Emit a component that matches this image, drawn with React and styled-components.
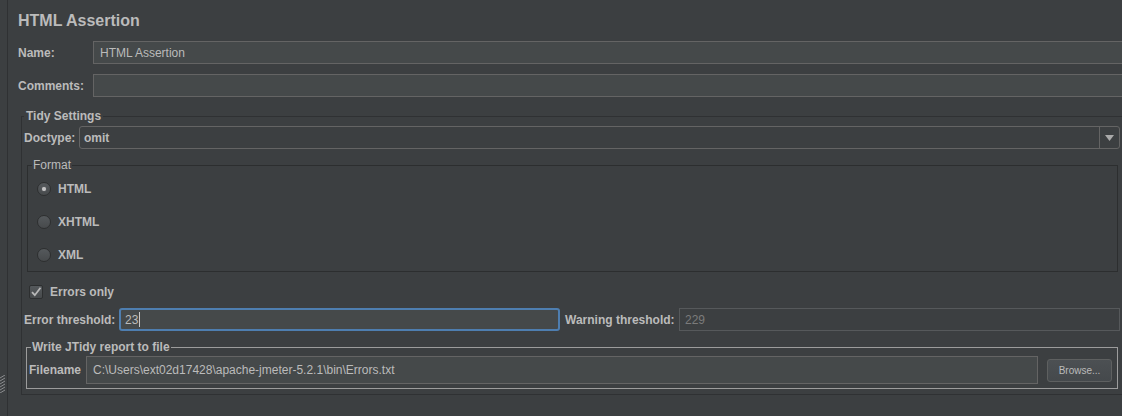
import React from "react";
import styled, { createGlobalStyle, css } from "styled-components";

const GlobalStyle = createGlobalStyle`
  html, body { margin: 0; padding: 0; background: #3c3f41; }
  body {
    font-family: "Liberation Sans", Arial, sans-serif;
    font-size: 12px;
    color: #bbbbbb;
  }
  * { box-sizing: border-box; }
`;

const Frame = styled.div`
  display: flex;
  width: 1122px;
  height: 416px;
  overflow: hidden;
  background: #3c3f41;
`;

const SideStrip = styled.div`
  flex: none;
  width: 7px;
  display: flex;
  flex-direction: column;
  justify-content: flex-end;
  padding-bottom: 23px;
`;

const Divider = styled.div`
  flex: none;
  width: 1px;
  background: #2f3133;
`;

const Main = styled.div`
  flex: none;
  width: 1115px;
  padding: 11px 0 0 10px;
  display: flex;
  flex-direction: column;
`;

const Title = styled.div`
  font-size: 16px;
  font-weight: bold;
  line-height: 20px;
  height: 20px;
  color: #bbbbbb;
`;

const FieldRow = styled.div`
  display: grid;
  grid-template-columns: 75px 1fr;
  align-items: center;
  margin-top: ${(p) => p.$top}px;
`;

const Label = styled.div`
  font-weight: bold;
  font-size: 12px;
  white-space: nowrap;
  color: #bbbbbb;
  ${(p) => p.$width && css`width: ${p.$width}px; flex: none;`}
  ${(p) => p.$gapLeft && css`margin-left: ${p.$gapLeft}px;`}
`;

const TextBox = styled.div`
  height: ${(p) => p.$h || 23}px;
  background: #45494a;
  border: 1px solid #646464;
  padding: 0 6px;
  display: flex;
  align-items: center;
  font-size: 12px;
  color: #bbbbbb;
  white-space: nowrap;
  overflow: hidden;
  ${(p) => p.$grow && css`flex: 1; min-width: 0;`}
  ${(p) => p.$width && css`width: ${p.$width}px; flex: none;`}
  ${(p) =>
    p.$focused &&
    css`
      border: 2px solid #4e7eb0;
      border-radius: 3px;
      padding: 0 4px;
    `}
  ${(p) =>
    p.$disabled &&
    css`
      background: #3c3f41;
      border-color: #56595b;
      color: #7b7b7b;
      padding: 0 5px;
    `}
`;

const Caret = styled.span`
  display: inline-block;
  width: 1px;
  height: 15px;
  margin-left: 1px;
  background: #c8c8c8;
`;

const Group = styled.fieldset`
  margin: ${(p) => p.$margin};
  padding: ${(p) => p.$padding};
  border: 1px solid ${(p) => p.$line};
  min-width: 0;
  display: flex;
  flex-direction: column;
`;

const Legend = styled.legend`
  padding: 0 ${(p) => p.$pad ?? 2}px;
  margin-left: ${(p) => p.$offset || 0}px;
  font-size: 12px;
  line-height: 14px;
  font-weight: ${(p) => (p.$bold ? "bold" : "normal")};
  color: #bbbbbb;
`;

const InlineRow = styled.div`
  display: flex;
  align-items: center;
  margin-top: ${(p) => p.$top || 0}px;
  height: ${(p) => p.$h}px;
`;

const Combo = styled.div`
  flex: 1;
  display: flex;
  height: 23px;
  border: 1px solid #646464;
  border-radius: 3px;
  background: #3c3f41;
`;

const ComboValue = styled.div`
  flex: 1;
  display: flex;
  align-items: center;
  padding: 0 4px;
  font-weight: bold;
  color: #bbbbbb;
`;

const ComboArrow = styled.div`
  flex: none;
  width: 20px;
  border-left: 1px solid #646464;
  display: flex;
  align-items: center;
  justify-content: center;
`;

const RadioRow = styled.div`
  height: 33px;
  display: flex;
  align-items: center;
  padding-left: 5px;
  gap: 7px;
`;

const RadioDot = styled.span`
  flex: none;
  width: 14px;
  height: 14px;
  border-radius: 50%;
  border: 1px solid #2d2f30;
  background: linear-gradient(#55595c, #474a4c);
  display: flex;
  align-items: center;
  justify-content: center;
  &::after {
    content: "";
    width: 4px;
    height: 4px;
    border-radius: 50%;
    background: ${(p) => (p.$on ? "#c4c4c4" : "transparent")};
    box-shadow: ${(p) => (p.$on ? "0 0 1px #9a9a9a" : "none")};
  }
`;

const CheckBox = styled.span`
  flex: none;
  width: 14px;
  height: 14px;
  border-radius: 2px;
  border: 1px solid #2d2f30;
  background: linear-gradient(#55595c, #474a4c);
  display: flex;
  align-items: center;
  justify-content: center;
`;

const CheckRow = styled.div`
  display: flex;
  align-items: center;
  gap: 7px;
  height: 24px;
  margin-top: 8px;
  padding-left: 5px;
`;

const Button = styled.div`
  flex: none;
  width: 65px;
  height: 23px;
  margin-left: 9px;
  border: 1px solid #5e6060;
  border-radius: 3px;
  background: linear-gradient(#4c5053, #45494c);
  display: flex;
  align-items: center;
  justify-content: center;
  font-size: 10px;
  color: #bbbbbb;
`;

const Grip = () => (
  <svg width="6" height="18" viewBox="0 0 6 18">
    {[0, 3, 6, 9, 12, 15].map((y) => (
      <line key={y} x1="0" y1={y + 3} x2="5" y2={y} stroke="#8a8c8e" strokeWidth="1" />
    ))}
  </svg>
);

export default function App() {
  return (
    <>
      <GlobalStyle />
      <Frame>
        <SideStrip>
          <Grip />
        </SideStrip>
        <Divider />
        <Main>
          <Title>HTML Assertion</Title>
          <FieldRow $top={10}>
            <Label>Name:</Label>
            <TextBox>HTML Assertion</TextBox>
          </FieldRow>
          <FieldRow $top={10}>
            <Label>Comments:</Label>
            <TextBox />
          </FieldRow>

          <Group $margin="12px 0 0 3px" $padding="3px 2px 5px 2px" $line="#2f3133">
            <Legend $bold>Tidy Settings</Legend>
            <InlineRow $h={23}>
              <Label $width={55}>Doctype:</Label>
              <Combo>
                <ComboValue>omit</ComboValue>
                <ComboArrow>
                  <svg width="9" height="6" viewBox="0 0 9 6">
                    <path d="M0 0 H9 L4.5 6 Z" fill="#a9a9a9" />
                  </svg>
                </ComboArrow>
              </Combo>
            </InlineRow>

            <Group $margin="9px 2px 0 3px" $padding="0 4px 0 4px" $line="#2c2e2f">
              <Legend $pad={1}>Format</Legend>
              <RadioRow>
                <RadioDot $on />
                <Label>HTML</Label>
              </RadioRow>
              <RadioRow>
                <RadioDot />
                <Label>XHTML</Label>
              </RadioRow>
              <RadioRow>
                <RadioDot />
                <Label>XML</Label>
              </RadioRow>
            </Group>

            <CheckRow>
              <CheckBox>
                <svg width="12" height="12" viewBox="0 0 12 12">
                  <path d="M2 6.2 L4.8 9.2 L10.5 1.8" fill="none" stroke="#b8b8b8" strokeWidth="1.8" />
                </svg>
              </CheckBox>
              <Label>Errors only</Label>
            </CheckRow>

            <InlineRow $top={4} $h={23}>
              <Label $width={95}>Error threshold:</Label>
              <TextBox $focused $width={441}>
                23
                <Caret />
              </TextBox>
              <Label $width={114} $gapLeft={5}>Warning threshold:</Label>
              <TextBox $disabled $grow>229</TextBox>
            </InlineRow>

            <Group $margin="9px 2px 0 2px" $padding="2px 5px 4px 2px" $line="#9c9c9c">
              <Legend $offset={2} $pad={1} $bold>Write JTidy report to file</Legend>
              <InlineRow $h={28}>
                <Label $width={57}>Filename</Label>
                <TextBox $grow $h={28}>C:\Users\ext02d17428\apache-jmeter-5.2.1\bin\Errors.txt</TextBox>
                <Button>Browse...</Button>
              </InlineRow>
            </Group>
          </Group>
        </Main>
      </Frame>
    </>
  );
}
